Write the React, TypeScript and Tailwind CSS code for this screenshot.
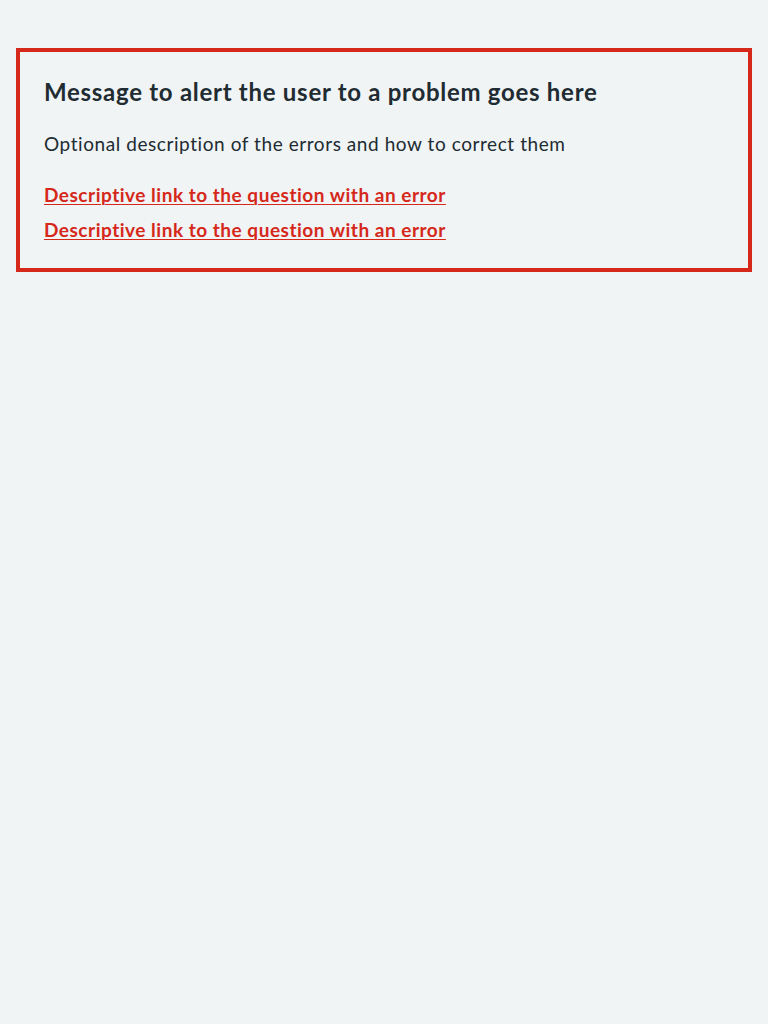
export default function App() {
  return (
    <div className="min-h-[1024px] bg-[#f0f4f5] px-4 pt-12 font-['Lato',sans-serif] text-[#212b32] [font-variant-ligatures:none]">
      <div className="border-4 border-[#d5281b] bg-[#f0f4f5] p-6" role="alert">
        <h2 className="mb-[22px] text-[24px] font-bold leading-8 tracking-[0.03em]">
          Message to alert the user to a problem goes here
        </h2>
        <p className="mb-[23px] text-[19px] leading-7 tracking-[0.03em]">
          Optional description of the errors and how to correct them
        </p>
        <ul className="flex flex-col gap-[7px]">
          <li className="text-[19px] font-bold leading-7 tracking-[0.027em]">
            <a href="#" className="text-[#d5281b] underline decoration-1 underline-offset-2">
              Descriptive link to the question with an error
            </a>
          </li>
          <li className="text-[19px] font-bold leading-7 tracking-[0.027em]">
            <a href="#" className="text-[#d5281b] underline decoration-1 underline-offset-2">
              Descriptive link to the question with an error
            </a>
          </li>
        </ul>
      </div>
    </div>
  )
}
